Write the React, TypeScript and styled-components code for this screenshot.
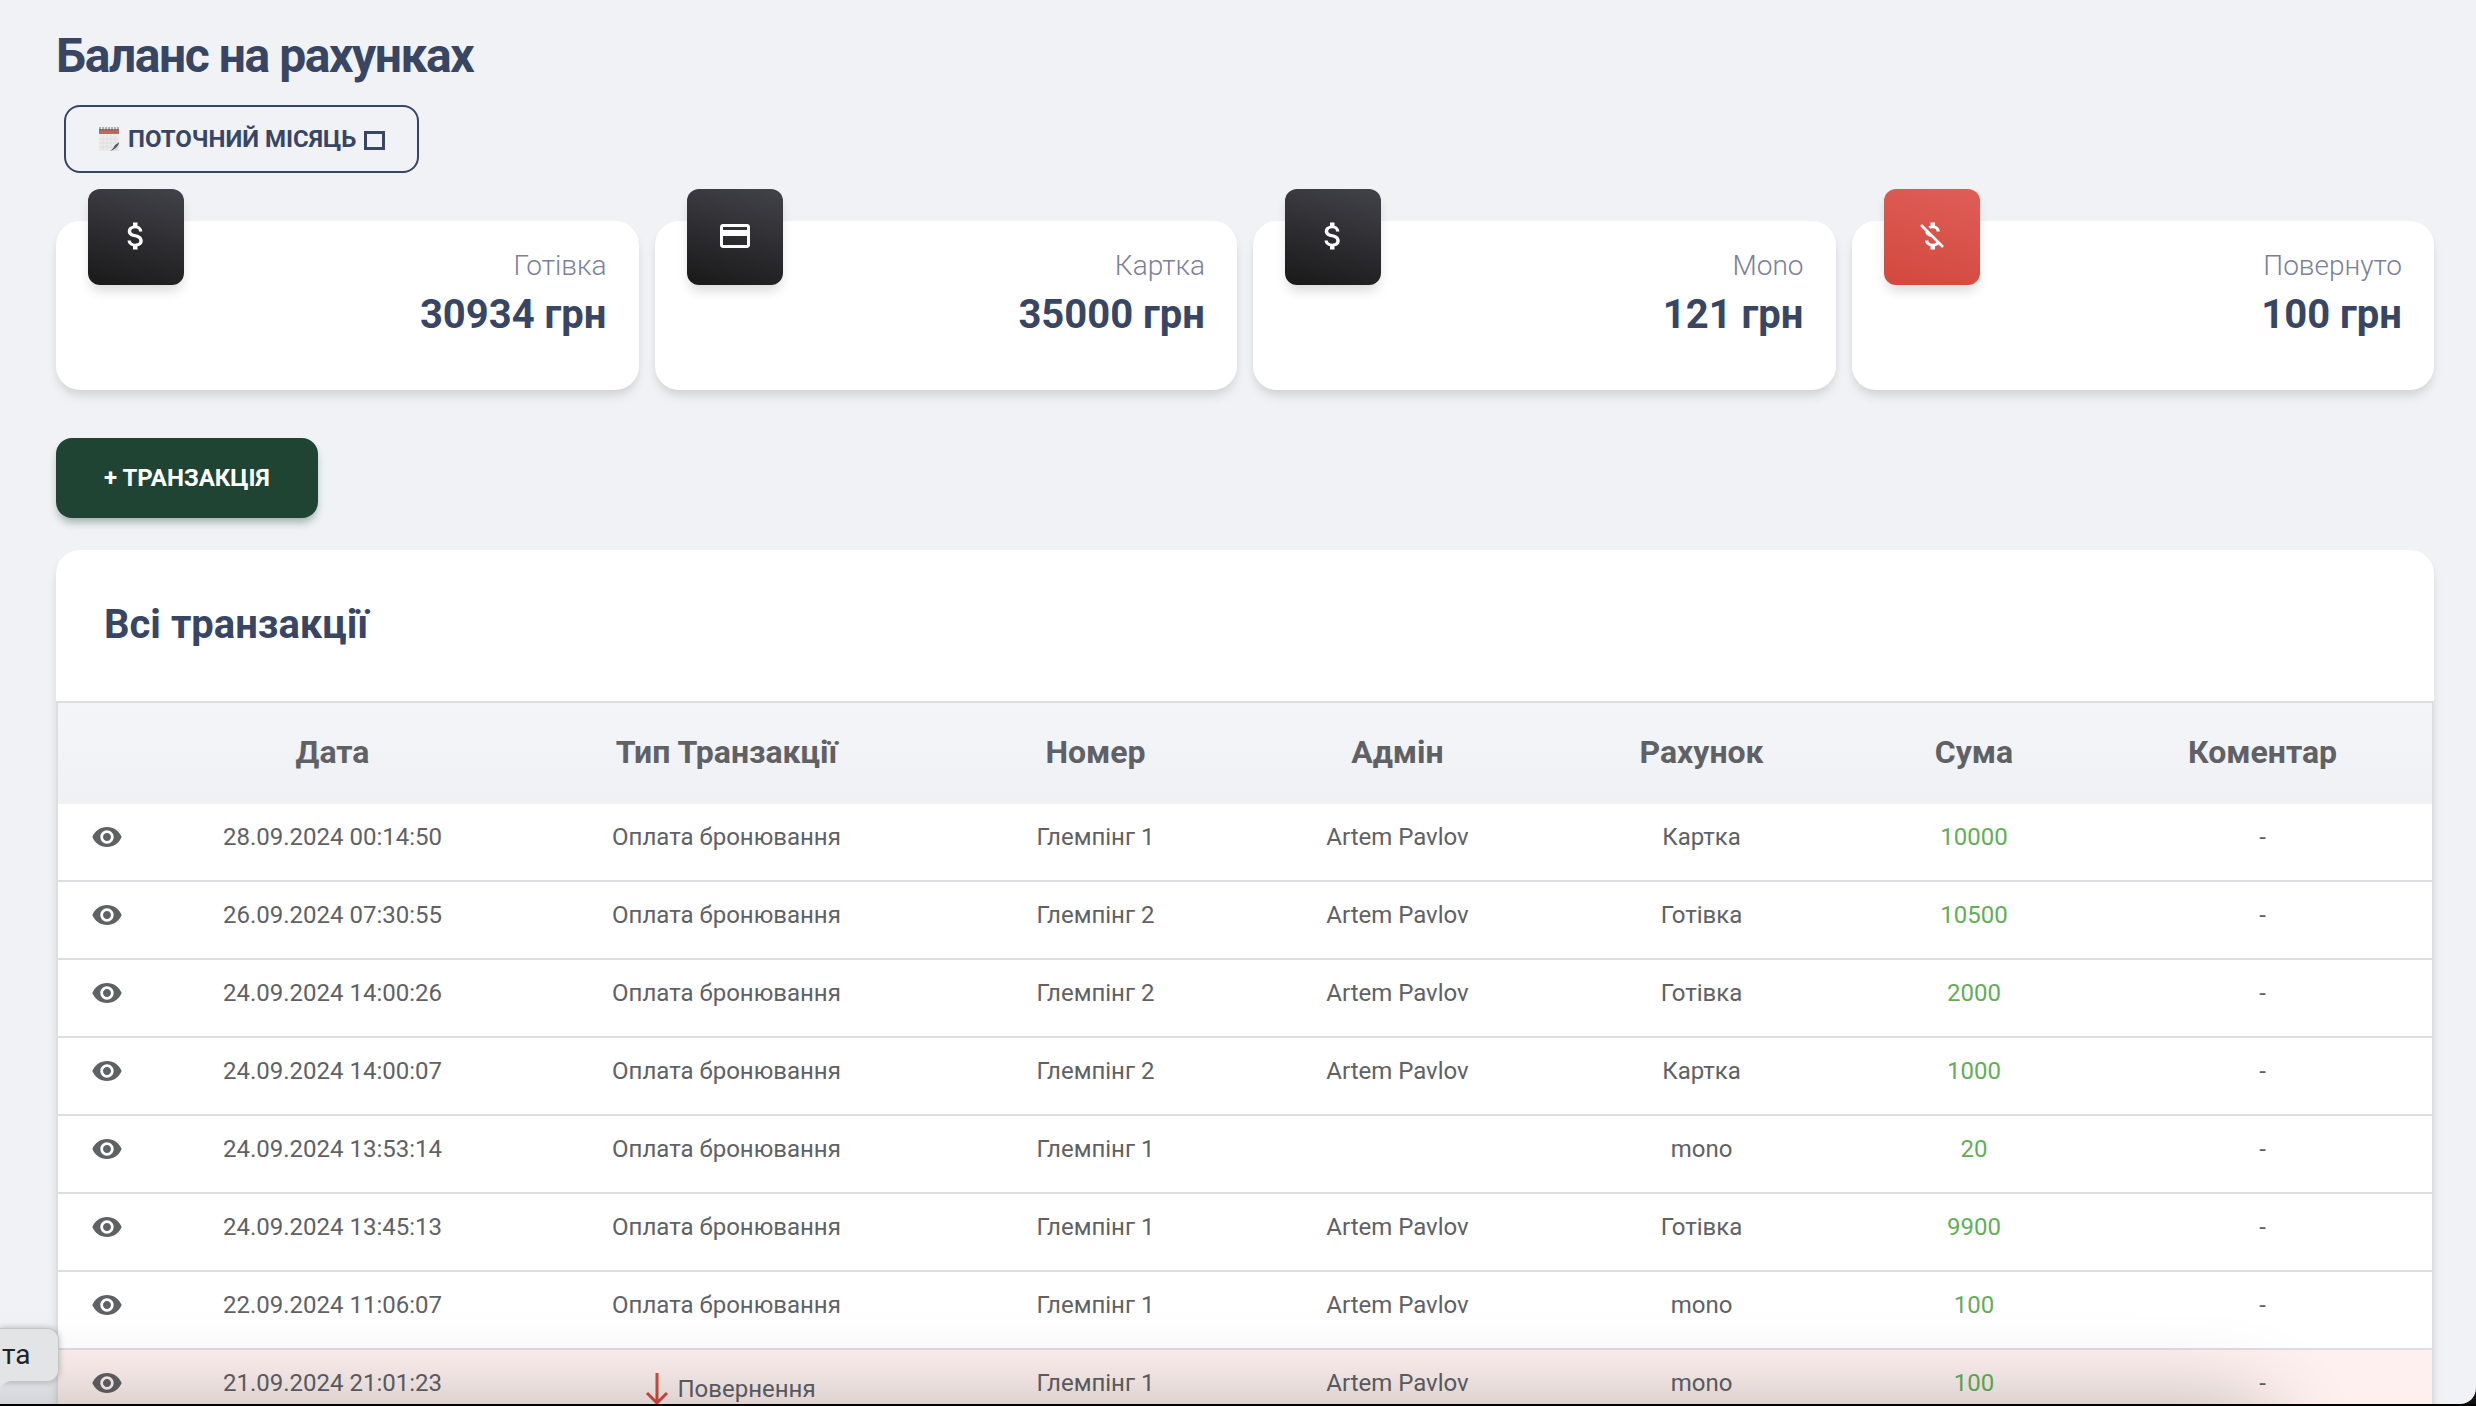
import React from "react";
import styled, { createGlobalStyle } from "styled-components";
import {
  MdAttachMoney,
  MdCreditCard,
  MdMoneyOff,
  MdVisibility,
} from "react-icons/md";

const GlobalStyle = createGlobalStyle`
  * { box-sizing: border-box; }
  html, body { margin: 0; }
  body {
    background: #f0f2f5;
    font-family: Roboto, "Noto Sans", sans-serif;
    color: #384664;
  }
`;

const Screen = styled.div`
  position: relative;
  height: 100vh;
  overflow: hidden;
`;

const Page = styled.main`
  padding: 24px 42px 0 56px;
`;

const PageTitle = styled.h1`
  margin: 0;
  font-size: 48px;
  line-height: 64px;
  font-weight: 700;
  letter-spacing: -0.03em;
`;

const PeriodButton = styled.button`
  display: flex;
  align-items: center;
  gap: 8px;
  height: 68px;
  margin: 17px 8px 0;
  padding: 0 32px;
  border: 2px solid #384664;
  border-radius: 16px;
  background: transparent;
  color: #384664;
  font: 700 24px/32px Roboto, sans-serif;
  text-transform: uppercase;
`;

const MissingGlyph = styled.span`
  width: 21px;
  height: 19px;
  margin-top: 2px;
  border: 3px solid #384664;
`;

const Cards = styled.section`
  display: grid;
  grid-template-columns: repeat(4, 1fr);
  gap: 16px;
  margin-top: 48px;
`;

const Card = styled.article`
  display: flex;
  justify-content: space-between;
  height: 169px;
  padding: 0 32px;
  border-radius: 24px;
  background: #fff;
  box-shadow: 0 8px 12px -2px rgba(0, 0, 0, 0.1), 0 4px 8px -2px rgba(0, 0, 0, 0.06);
`;

const Tile = styled.div<{ $tone: "dark" | "red" }>`
  display: grid;
  place-items: center;
  width: 96px;
  height: 96px;
  margin-top: -32px;
  padding-bottom: 2px;
  border-radius: 12px;
  color: #fff;
  font-size: 36px;
  background: ${(p) =>
    p.$tone === "dark"
      ? "linear-gradient(195deg, #42424a, #191919)"
      : "linear-gradient(195deg, #de5e57, #d3483e)"};
  box-shadow: 0 8px 12px -2px rgba(0, 0, 0, 0.14);
`;

const Figures = styled.div`
  padding-top: 24px;
  text-align: right;
`;

const Label = styled.p`
  margin: 0;
  color: #7b809a;
  font-size: 28px;
  line-height: 42px;
  font-weight: 300;
`;

const Amount = styled.p`
  margin: 0;
  font-size: 40px;
  line-height: 56px;
  font-weight: 700;
`;

const AddButton = styled.button`
  display: block;
  height: 80px;
  margin-top: 48px;
  padding: 0 48px;
  border: 0;
  border-radius: 16px;
  background: #204434;
  color: #fff;
  font: 700 24px/32px Roboto, sans-serif;
  text-transform: uppercase;
  box-shadow: 0 6px 8px -2px rgba(32, 68, 52, 0.4);
`;

const Panel = styled.section`
  margin-top: 32px;
  border-radius: 24px 24px 0 0;
  background: #fff;
  box-shadow: 0 8px 12px -2px rgba(0, 0, 0, 0.1), 0 4px 8px -2px rgba(0, 0, 0, 0.06);
`;

const PanelTitle = styled.h2`
  margin: 0;
  padding: 47px 48px 48px;
  font-size: 40px;
  line-height: 56px;
  font-weight: 700;
`;

const Table = styled.table`
  width: 100%;
  table-layout: fixed;
  border-collapse: separate;
  border-spacing: 0;
  border: 2px solid #dddee4;
  border-bottom: 0;
  color: #606165;
  text-align: center;
`;

const Head = styled.thead`
  background: linear-gradient(#f4f5f9, #f0f1f5);
`;

const HeadCell = styled.th`
  height: 101px;
  padding: 0 0 4px;
  font-size: 32px;
  line-height: 40px;
  font-weight: 700;
`;

const Row = styled.tr<{ $refund?: boolean }>`
  background: ${(p) => (p.$refund ? "#fdf0ef" : "#fff")};
`;

const Cell = styled.td<{ $money?: boolean }>`
  height: 78px;
  padding: 17px 0 0;
  border-bottom: 2px solid #dddee4;
  vertical-align: top;
  font-size: 24px;
  line-height: 32px;
  color: ${(p) => (p.$money ? "#64ad58" : "inherit")};
`;

const ViewButton = styled.button`
  display: block;
  width: 32px;
  height: 32px;
  margin: 0 auto;
  padding: 0;
  border: 0;
  background: none;
  color: #606165;
  font-size: 32px;
  line-height: 32px;
`;

const Refund = styled.span`
  display: flex;
  justify-content: center;
  align-items: center;
  gap: 4px;
  padding: 6px 0 0 4px;
`;

const DockShade = styled.div`
  position: absolute;
  left: -200px;
  right: 204px;
  bottom: -198px;
  height: 200px;
  border-radius: 40px;
  box-shadow: 0 0 90px rgba(0, 0, 0, 0.24);
  pointer-events: none;
`;

const DockEdge = styled.div`
  position: absolute;
  left: 0;
  right: 0;
  bottom: 0;
  height: 2px;
  background: #000;
`;

const Corner = styled.svg`
  position: absolute;
  right: 0;
  bottom: 2px;
`;

const DockTip = styled.div`
  position: absolute;
  left: 0;
  bottom: 24px;
  padding: 10px 28px 10px 2px;
  border: 1px solid #c4c5c7;
  border-left: 0;
  border-radius: 0 12px 12px 0;
  background: #e3e4e6;
  color: #222;
  font-size: 28px;
  line-height: 32px;
  box-shadow: 0 0 6px rgba(0, 0, 0, 0.25);
`;

const DockTipTail = styled.svg`
  position: absolute;
  left: 0;
  top: 100%;
  margin-top: -1px;
`;

const columns = [
  { title: "", width: 98 },
  { title: "Дата", width: 353 },
  { title: "Тип Транзакції", width: 435 },
  { title: "Номер", width: 303 },
  { title: "Адмін", width: 301 },
  { title: "Рахунок", width: 307 },
  { title: "Сума", width: 238 },
  { title: "Коментар", width: 339 },
];

type Transaction = {
  date: string;
  room: string;
  admin: string;
  account: string;
  sum: number;
  refund?: boolean;
};

const transactions: Transaction[] = [
  { date: "28.09.2024 00:14:50", room: "Глемпінг 1", admin: "Artem Pavlov", account: "Картка", sum: 10000 },
  { date: "26.09.2024 07:30:55", room: "Глемпінг 2", admin: "Artem Pavlov", account: "Готівка", sum: 10500 },
  { date: "24.09.2024 14:00:26", room: "Глемпінг 2", admin: "Artem Pavlov", account: "Готівка", sum: 2000 },
  { date: "24.09.2024 14:00:07", room: "Глемпінг 2", admin: "Artem Pavlov", account: "Картка", sum: 1000 },
  { date: "24.09.2024 13:53:14", room: "Глемпінг 1", admin: "", account: "mono", sum: 20 },
  { date: "24.09.2024 13:45:13", room: "Глемпінг 1", admin: "Artem Pavlov", account: "Готівка", sum: 9900 },
  { date: "22.09.2024 11:06:07", room: "Глемпінг 1", admin: "Artem Pavlov", account: "mono", sum: 100 },
  { date: "21.09.2024 21:01:23", room: "Глемпінг 1", admin: "Artem Pavlov", account: "mono", sum: 100, refund: true },
];

const balances = [
  { label: "Готівка", amount: "30934 грн", tone: "dark" as const, icon: <MdAttachMoney /> },
  { label: "Картка", amount: "35000 грн", tone: "dark" as const, icon: <MdCreditCard /> },
  { label: "Mono", amount: "121 грн", tone: "dark" as const, icon: <MdAttachMoney /> },
  { label: "Повернуто", amount: "100 грн", tone: "red" as const, icon: <MdMoneyOff /> },
];

function NotepadIcon() {
  return (
    <svg width="22" height="26" viewBox="0 0 22 26" aria-hidden="true">
      <path d="M1 3h20v14l-8 8H1z" fill="#ebebeb" />
      <path d="M5 9v15M9 9v15M13 9v14M17 9v10M1 13h20M1 17h19M1 21h15" stroke="#dfdfdf" strokeWidth="1" />
      <path d="M1 3h20v5H1z" fill="#bf6562" />
      <path d="M2 1v4M5 1v4M8 1v4M11 1v4M14 1v4M17 1v4M20 1v4" stroke="#6f6463" strokeWidth="1" />
      <path d="M21 17l-8 8h8z" fill="#e2e2e2" />
      <path d="M21 16c-2 2-3 2-4 3-1 2-2 4-5 6 4-1 8-4 9-8z" fill="#5a5a5a" />
    </svg>
  );
}

function RefundArrow() {
  return (
    <svg width="32" height="32" viewBox="0 0 32 32" fill="none" stroke="#d64c40" strokeWidth="3" aria-hidden="true">
      <path d="M16 0v30M6 20l10 10 10-10" />
    </svg>
  );
}

export default function App() {
  return (
    <Screen>
      <GlobalStyle />
      <Page>
        <PageTitle>Баланс на рахунках</PageTitle>
        <PeriodButton type="button">
          <NotepadIcon />
          Поточний місяць
          <MissingGlyph />
        </PeriodButton>

        <Cards>
          {balances.map((b) => (
            <Card key={b.label}>
              <Tile $tone={b.tone}>{b.icon}</Tile>
              <Figures>
                <Label>{b.label}</Label>
                <Amount>{b.amount}</Amount>
              </Figures>
            </Card>
          ))}
        </Cards>

        <AddButton type="button">+ Транзакція</AddButton>

        <Panel>
          <PanelTitle>Всі транзакції</PanelTitle>
          <Table>
            <colgroup>
              {columns.map((c) => (
                <col key={c.title} width={c.width} />
              ))}
            </colgroup>
            <Head>
              <tr>
                {columns.map((c) => (
                  <HeadCell key={c.title} scope="col">
                    {c.title}
                  </HeadCell>
                ))}
              </tr>
            </Head>
            <tbody>
              {transactions.map((t) => (
                <Row key={t.date} $refund={t.refund}>
                  <Cell>
                    <ViewButton type="button" aria-label="Переглянути">
                      <MdVisibility />
                    </ViewButton>
                  </Cell>
                  <Cell>{t.date}</Cell>
                  <Cell>
                    {t.refund ? (
                      <Refund>
                        <RefundArrow />
                        Повернення
                      </Refund>
                    ) : (
                      "Оплата бронювання"
                    )}
                  </Cell>
                  <Cell>{t.room}</Cell>
                  <Cell>{t.admin}</Cell>
                  <Cell>{t.account}</Cell>
                  <Cell $money>{t.sum}</Cell>
                  <Cell>-</Cell>
                </Row>
              ))}
            </tbody>
          </Table>
        </Panel>
      </Page>
      <DockShade />
      <DockTip>
        та
        <DockTipTail width="14" height="8" viewBox="0 0 14 8" aria-hidden="true">
          <path d="M0 0H14C8 1 4 3 0 8z" fill="#e3e4e6" />
        </DockTipTail>
      </DockTip>
      <Corner width="16" height="16" viewBox="0 0 16 16" aria-hidden="true">
        <path d="M16 0v16H0C9 16 16 9 16 0z" fill="#111" />
      </Corner>
      <DockEdge />
    </Screen>
  );
}
